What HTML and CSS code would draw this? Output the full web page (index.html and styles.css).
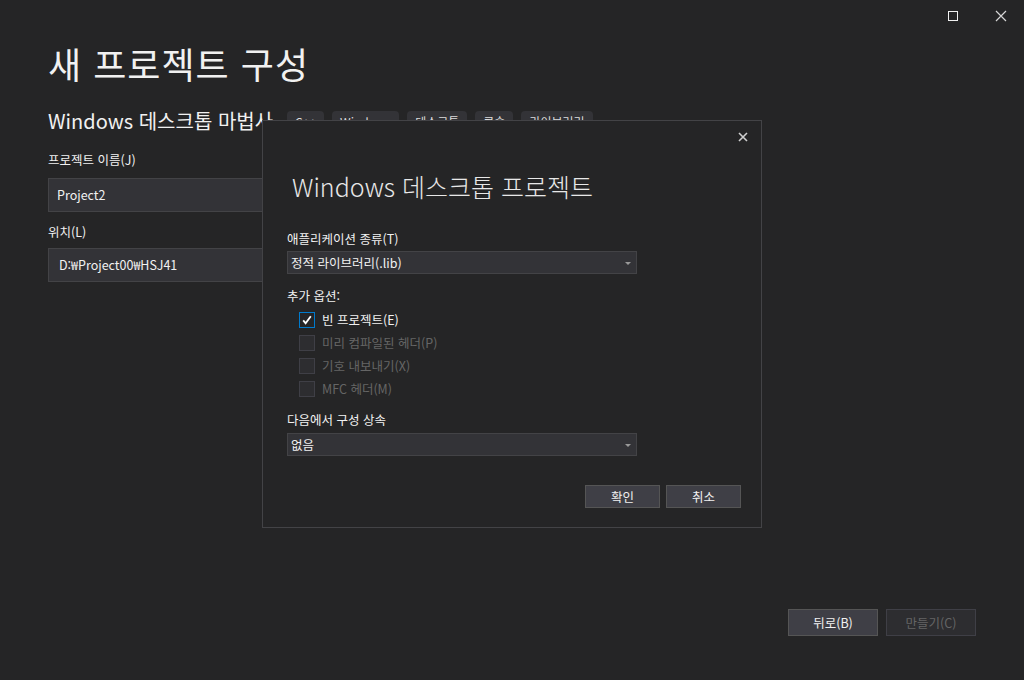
FILE: index.html
```html
<!DOCTYPE html>
<html lang="ko">
<head>
<meta charset="utf-8">
<title>새 프로젝트 구성</title>
<link rel="stylesheet" href="styles.css">
</head>
<body>
<div class="window">
  <div class="titlebar">
    <span class="ctl">
      <svg width="12" height="12" viewBox="0 0 12 12"><rect x="1.5" y="1.5" width="9" height="9" fill="none" stroke="#f1f1f1" stroke-width="1"/></svg>
    </span>
    <span class="ctl">
      <svg width="12" height="12" viewBox="0 0 12 12"><path d="M1 1 L11 11 M11 1 L1 11" stroke="#d6d6d6" stroke-width="1.2" fill="none"/></svg>
    </span>
  </div>

  <div class="content">
    <h1 class="heading">새 프로젝트 구성</h1>
    <div class="subrow">
      <span class="subtitle">Windows 데스크톱 마법사</span>
      <div class="tags">
        <span class="tag">C++</span>
        <span class="tag">Windows</span>
        <span class="tag">데스크톱</span>
        <span class="tag">콘솔</span>
        <span class="tag">라이브러리</span>
      </div>
    </div>
    <div class="label label-first">프로젝트 이름(J)</div>
    <div class="field field-first">Project2</div>
    <div class="label label-second">위치(L)</div>
    <div class="field field-second">D:₩Project00₩HSJ41</div>
  </div>

  <div class="footer">
    <button class="btn btn-main">뒤로(B)</button>
    <button class="btn btn-main btn-disabled">만들기(C)</button>
  </div>

  <div class="dialog">
    <div class="dlg-close">
      <svg width="10" height="10" viewBox="0 0 10 10"><path d="M1 1 L9 9 M9 1 L1 9" stroke="#d0d0d0" stroke-width="1.6" fill="none"/></svg>
    </div>
    <div class="dlg-title">Windows 데스크톱 프로젝트</div>
    <div class="dlg-label dl1">애플리케이션 종류(T)</div>
    <div class="select sel1"><span>정적 라이브러리(.lib)</span><span class="caret"></span></div>
    <div class="dlg-label dl2">추가 옵션:</div>
    <div class="checks">
      <div class="check"><span class="box box-on"><svg width="12" height="12" viewBox="0 0 12 12"><path d="M2.2 6.4 L4.6 9.2 L9.8 2.2" stroke="#ffffff" stroke-width="1.8" fill="none"/></svg></span><span class="ctext">빈 프로젝트(E)</span></div>
      <div class="check off"><span class="box"></span><span class="ctext">미리 컴파일된 헤더(P)</span></div>
      <div class="check off"><span class="box"></span><span class="ctext">기호 내보내기(X)</span></div>
      <div class="check off"><span class="box"></span><span class="ctext">MFC 헤더(M)</span></div>
    </div>
    <div class="dlg-label dl3">다음에서 구성 상속</div>
    <div class="select sel2"><span>없음</span><span class="caret"></span></div>
    <div class="dlg-buttons">
      <button class="btn btn-small">확인</button>
      <button class="btn btn-small">취소</button>
    </div>
  </div>
</div>
</body>
</html>
```

FILE: styles.css
```css
* { box-sizing: border-box; }
html, body { margin: 0; padding: 0; }
body {
  width: 1024px;
  height: 680px;
  overflow: hidden;
  background: #252526;
  color: #f1f1f1;
  font-family: "Noto Sans CJK KR", "Noto Sans", sans-serif;
}
.window {
  position: relative;
  width: 1024px;
  height: 680px;
  display: flex;
  flex-direction: column;
}
.titlebar {
  height: 32px;
  display: flex;
  justify-content: flex-end;
  align-items: center;
  padding-right: 17px;
  gap: 36px;
}
.ctl { width: 12px; height: 12px; display: flex; }
.content {
  padding-left: 48px;
  display: flex;
  flex-direction: column;
}
.heading {
  margin: 7px 0 0 0;
  font-size: 36px;
  line-height: 48px;
  font-weight: 400;
  color: #f1f1f1;
  letter-spacing: 1px;
}
.subrow {
  margin-top: 20px;
  height: 28px;
  display: flex;
  align-items: center;
}
.subtitle {
  font-size: 20px;
  line-height: 28px;
  color: #f1f1f1;
}
.tags {
  display: flex;
  gap: 8px;
  margin-left: 14px;
  align-self: flex-start;
  margin-top: 4px;
}
.tag {
  background: #333337;
  border-radius: 4px;
  height: 22px;
  padding: 0 8px;
  font-size: 12px;
  line-height: 22px;
  color: #dcdcdc;
}
.label {
  font-size: 12.5px;
  line-height: 18px;
  color: #f1f1f1;
}
.label-first { margin-top: 16px; }
.label-second { margin-top: 11px; }
.field {
  width: 480px;
  height: 34px;
  background: #333337;
  border: 1px solid #434346;
  font-size: 12.5px;
  line-height: 32px;
  padding-left: 8px;
  color: #f1f1f1;
}
.field-first { margin-top: 9px; }
.field-second { margin-top: 7px; padding-left: 10px; }

.footer {
  margin-top: auto;
  display: flex;
  justify-content: flex-end;
  gap: 8px;
  padding: 0 48px 44px 0;
}
.btn {
  font-family: "Noto Sans CJK KR", "Noto Sans", sans-serif;
  background: #3f3f46;
  border: 1px solid #555555;
  color: #f1f1f1;
  font-size: 12.5px;
  padding: 0;
  margin: 0;
}
.btn-main { width: 90px; height: 27px; }
.btn-disabled {
  background: #2d2d30;
  border-color: #3f3f46;
  color: #656565;
}

.dialog {
  position: absolute;
  left: 262px;
  top: 120px;
  width: 500px;
  height: 408px;
  background: #252526;
  border: 1px solid #434346;
  padding: 0 20px 0 24px;
  display: flex;
  flex-direction: column;
}
.dlg-close {
  height: 32px;
  display: flex;
  justify-content: flex-end;
  align-items: center;
  margin-right: -7px;
}
.dlg-title {
  margin-top: 17px;
  margin-left: 5px;
  font-size: 25px;
  line-height: 32px;
  font-weight: 300;
  color: #e8e8e8;
}
.dlg-label {
  font-size: 12.5px;
  line-height: 18px;
  color: #f1f1f1;
}
.dl1 { margin-top: 28px; }
.dl2 { margin-top: 13px; }
.dl3 { margin-top: 11px; }
.select {
  width: 350px;
  height: 23px;
  background: #333337;
  border: 1px solid #434346;
  display: flex;
  align-items: center;
  justify-content: space-between;
  padding: 0 5px 0 3px;
  font-size: 12.5px;
  color: #f1f1f1;
}
.sel1 { margin-top: 3px; }
.sel2 { margin-top: 4px; }
.caret {
  width: 0;
  height: 0;
  border-left: 3px solid transparent;
  border-right: 3px solid transparent;
  border-top: 3px solid #999999;
  margin-top: 2px;
}
.checks {
  margin-top: 3px;
  display: flex;
  flex-direction: column;
  padding-left: 12px;
}
.check {
  height: 23px;
  display: flex;
  align-items: center;
  gap: 7px;
  font-size: 12.5px;
  color: #f1f1f1;
}
.box {
  width: 16px;
  height: 16px;
  border: 1px solid #3f3f46;
  background: #2d2d30;
  display: flex;
  align-items: center;
  justify-content: center;
}
.box-on {
  border-color: #007acc;
  background: #252526;
}
.check.off { color: #656565; }
.dlg-buttons {
  margin-top: 29px;
  display: flex;
  justify-content: flex-end;
  gap: 6px;
}
.btn-small { width: 75px; height: 23px; }
```
